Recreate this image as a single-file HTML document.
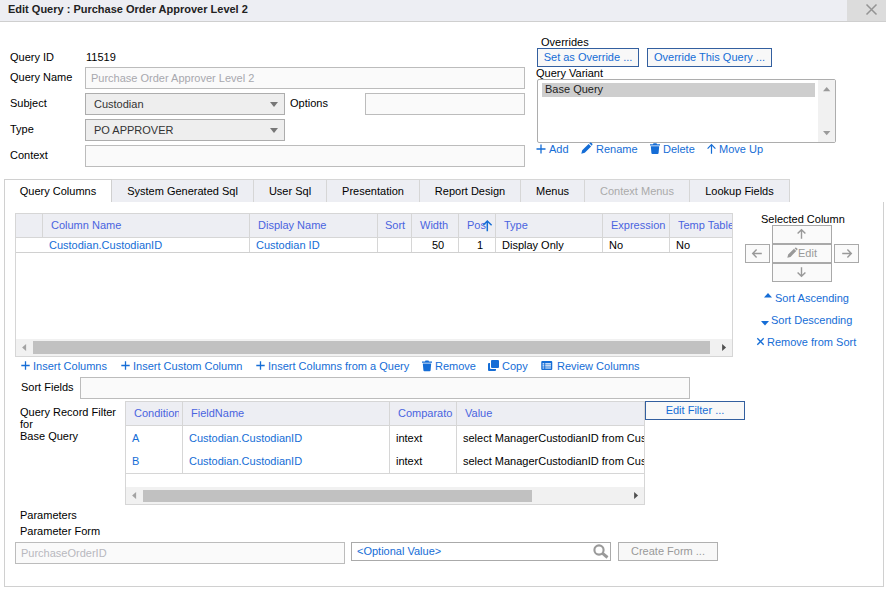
<!DOCTYPE html>
<html><head><meta charset="utf-8">
<style>
*{box-sizing:border-box;margin:0;padding:0}
html,body{width:886px;height:592px;overflow:hidden;background:#fff}
body{font-family:"Liberation Sans",Arial,sans-serif;font-size:11px;color:#000;position:relative}
.a{position:absolute;white-space:nowrap}
.t{position:absolute;white-space:nowrap;line-height:14px;height:14px}
.inp{position:absolute;border:1px solid #bcbcbc;background:#fafafa;height:22px;line-height:20px;padding-left:5px;color:#a8a8ae;white-space:nowrap;overflow:hidden}
.sel{position:absolute;border:1px solid #adadad;background:#eee;height:22px;line-height:20px;padding-left:8px;color:#333}
.sel:after{content:"";position:absolute;right:6px;top:8px;border:4px solid transparent;border-top:5px solid #777;border-bottom:0}
.btn{position:absolute;border:1px solid #335f9f;background:#f8f8f8;color:#156dd6;height:19px;line-height:17px;text-align:center}
.gb{position:absolute;border:1px solid #a9a9a9;background:#fafafa;color:#999}
.lnk{color:#156dd6}
.tab{position:absolute;top:179px;height:23px;line-height:22px;text-align:center;background:#edeef3;border:1px solid #d6d6d6;border-bottom:none;color:#000}
.hd{color:#4a64e0}
.vs{position:absolute;width:1px;background:#d6d6d6}
svg{position:absolute;overflow:visible}
</style></head><body>
<!-- title bar -->
<div class="a" style="left:0;top:0;width:886px;height:22px;background:#edeef3;border-bottom:1px solid #cfcfcf"></div>
<div class="t" style="left:8px;top:2px;font-weight:bold;color:#222">Edit Query : Purchase Order Approver Level 2</div>
<div class="a" style="left:847px;top:0;width:39px;height:21px;background:#dcdcdc"></div>
<svg style="left:866px;top:4px" width="11" height="11" viewBox="0 0 11 11"><path d="M0.5 0.5L10.5 10.5M10.5 0.5L0.5 10.5" stroke="#949494" stroke-width="1.5" fill="none"/></svg>

<!-- form -->
<div class="t" style="left:10px;top:50px">Query ID</div>
<div class="t" style="left:86px;top:50px">11519</div>
<div class="t" style="left:10px;top:70px">Query Name</div>
<div class="inp" style="left:85px;top:67px;width:440px">Purchase Order Approver Level 2</div>
<div class="t" style="left:10px;top:96px">Subject</div>
<div class="sel" style="left:85px;top:93px;width:200px">Custodian</div>
<div class="t" style="left:290px;top:96px">Options</div>
<div class="inp" style="left:365px;top:93px;width:160px"></div>
<div class="t" style="left:10px;top:122px">Type</div>
<div class="sel" style="left:85px;top:119px;width:200px">PO APPROVER</div>
<div class="t" style="left:10px;top:148px">Context</div>
<div class="inp" style="left:85px;top:145px;width:440px"></div>

<!-- overrides -->
<div class="t" style="left:541px;top:35px">Overrides</div>
<div class="btn" style="left:537px;top:48px;width:102px">Set as Override ...</div>
<div class="btn" style="left:647px;top:48px;width:125px">Override This Query ...</div>
<div class="t" style="left:536px;top:66px">Query Variant</div>
<div class="a" style="left:537px;top:79px;width:299px;height:64px;border:1px solid #adadad;border-radius:2px;background:#fff"></div>
<div class="a" style="left:818px;top:80px;width:17px;height:62px;background:#f1f1f1"></div>
<div class="a" style="left:542px;top:83px;width:273px;height:14px;background:#cecece;line-height:13px;padding-left:3px;color:#222">Base Query</div>
<svg style="left:823px;top:87px" width="7.4" height="4.2" viewBox="0 0 7 4"><path d="M0 4L3.5 0L7 4Z" fill="#9a9a9a"/></svg>
<svg style="left:823px;top:131px" width="7.4" height="4.2" viewBox="0 0 7 4"><path d="M0 0L3.5 4L7 0Z" fill="#9a9a9a"/></svg>

<svg style="left:536px;top:144px" width="10" height="10" viewBox="0 0 10 10"><path d="M5 0.5V9.5M0.5 5H9.5" stroke="#156dd6" stroke-width="1.3" fill="none"/></svg>
<div class="t lnk" style="left:549px;top:142px">Add</div>
<svg style="left:581px;top:143px" width="12" height="11" viewBox="0 0 12 11"><path d="M0.3 10.7L1.2 7.2L7.6 0.9L10.1 3.4L3.8 9.8Z M8.3 0.3L9 -0.3Q9.8 -0.8 10.5 -0.1L11.2 0.6Q11.8 1.3 11.3 2L10.7 2.7Z" fill="#156dd6"/></svg>
<div class="t lnk" style="left:596px;top:142px">Rename</div>
<svg style="left:650px;top:143px" width="10" height="11" viewBox="0 0 10 11"><path d="M0 1.2H3L3.5 0.3H6.5L7 1.2H10V2.4H0Z M0.8 3.2H9.2L8.6 10Q8.5 10.9 7.6 10.9H2.4Q1.5 10.9 1.4 10Z" fill="#156dd6"/></svg>
<div class="t lnk" style="left:663px;top:142px">Delete</div>
<svg style="left:707px;top:144px" width="9" height="10" viewBox="0 0 9 10"><path d="M4.5 9.8V0.8M0.6 4.6L4.5 0.7L8.4 4.6" stroke="#156dd6" stroke-width="1.2" fill="none"/></svg>
<div class="t lnk" style="left:719px;top:142px">Move Up</div>

<!-- tabs -->
<div class="a" style="left:4px;top:179px;width:880px;height:408px;border:1px solid #d0d0d0;border-top:none;border-right:none"></div>
<div class="a" style="left:883px;top:202px;width:1px;height:385px;background:#d0d0d0"></div>
<div class="tab" style="left:4px;width:108px;background:#fff;border-color:#d0d0d0">Query Columns</div>
<div class="tab" style="left:112px;width:142px;border-left:none">System Generated Sql</div>
<div class="tab" style="left:253px;width:74px">User Sql</div>
<div class="tab" style="left:326px;width:94px">Presentation</div>
<div class="tab" style="left:419px;width:102px">Report Design</div>
<div class="tab" style="left:520px;width:65px">Menus</div>
<div class="tab" style="left:584px;width:106px;color:#aaa">Context Menus</div>
<div class="tab" style="left:689px;width:101px">Lookup Fields</div>

<!-- grid 1 -->
<div class="a" style="left:15px;top:213px;width:718px;height:144px;border:1px solid #d6d6d6"></div>
<div class="a" style="left:16px;top:214px;width:716px;height:24px;background:#edeef3;border-bottom:1px solid #d6d6d6"></div>
<div class="a" style="left:16px;top:252px;width:716px;height:1px;background:#d0d0d0"></div>
<div class="vs" style="left:42px;top:214px;height:24px"></div>
<div class="vs" style="left:249px;top:214px;height:38px"></div>
<div class="vs" style="left:377px;top:214px;height:38px"></div>
<div class="vs" style="left:411px;top:214px;height:38px"></div>
<div class="vs" style="left:458px;top:214px;height:38px"></div>
<div class="vs" style="left:495px;top:214px;height:38px"></div>
<div class="vs" style="left:602px;top:214px;height:38px"></div>
<div class="vs" style="left:669px;top:214px;height:38px"></div>
<div class="t hd" style="left:51px;top:218px">Column Name</div>
<div class="t hd" style="left:258px;top:218px">Display Name</div>
<div class="t hd" style="left:385px;top:218px">Sort</div>
<div class="t hd" style="left:420px;top:218px">Width</div>
<div class="t hd" style="left:467px;top:218px">Pos</div>
<svg style="left:483px;top:219.5px" width="9" height="11.5" viewBox="0 0 9 11.5"><path d="M4.3 11.3V1M0.4 5L4.3 1L8.6 5.2" stroke="#156dd6" stroke-width="1.5" fill="none"/></svg>
<div class="t hd" style="left:504px;top:218px">Type</div>
<div class="t hd" style="left:611px;top:218px">Expression</div>
<div class="t hd" style="left:678px;top:218px;width:54px;overflow:hidden">Temp Table</div>
<div class="t lnk" style="left:49px;top:238px">Custodian.CustodianID</div>
<div class="t lnk" style="left:256px;top:238px">Custodian ID</div>
<div class="t" style="left:432px;top:238px">50</div>
<div class="t" style="left:477px;top:238px">1</div>
<div class="t" style="left:502px;top:238px">Display Only</div>
<div class="t" style="left:609px;top:238px">No</div>
<div class="t" style="left:676px;top:238px">No</div>
<!-- scrollbar -->
<div class="a" style="left:16px;top:339px;width:716px;height:17px;background:#f1f1f1"></div>
<div class="a" style="left:33px;top:341px;width:677px;height:13px;background:#c1c1c1"></div>
<svg style="left:22px;top:344px" width="4.2" height="7" viewBox="0 0 4 7"><path d="M4 0L0 3.5L4 7Z" fill="#a3a3a3"/></svg>
<svg style="left:722px;top:344px" width="4.2" height="7" viewBox="0 0 4 7"><path d="M0 0L4 3.5L0 7Z" fill="#505050"/></svg>

<!-- links row -->
<svg style="left:20.8px;top:361.4px" width="9" height="9" viewBox="0 0 9 9"><path d="M4.5 0.3V8.7M0.3 4.5H8.7" stroke="#156dd6" stroke-width="1.3" fill="none"/></svg>
<div class="t lnk" style="left:33px;top:359px">Insert Columns</div>
<svg style="left:120.8px;top:361.4px" width="9" height="9" viewBox="0 0 9 9"><path d="M4.5 0.3V8.7M0.3 4.5H8.7" stroke="#156dd6" stroke-width="1.3" fill="none"/></svg>
<div class="t lnk" style="left:133px;top:359px">Insert Custom Column</div>
<svg style="left:255.8px;top:361.4px" width="9" height="9" viewBox="0 0 9 9"><path d="M4.5 0.3V8.7M0.3 4.5H8.7" stroke="#156dd6" stroke-width="1.3" fill="none"/></svg>
<div class="t lnk" style="left:268px;top:359px">Insert Columns from a Query</div>
<svg style="left:422px;top:360px" width="10" height="11.5" viewBox="0 0 10 11"><path d="M0 1.2H3L3.5 0.3H6.5L7 1.2H10V2.4H0Z M0.8 3.2H9.2L8.6 10Q8.5 10.9 7.6 10.9H2.4Q1.5 10.9 1.4 10Z" fill="#156dd6"/></svg>
<div class="t lnk" style="left:435px;top:359px">Remove</div>
<svg style="left:488px;top:360px" width="11" height="11" viewBox="0 0 11 11"><path d="M4 0H10Q11 0 11 1V7Q11 8 10 8H4Q3 8 3 7V1Q3 0 4 0Z M0 4Q0 3 1 3H2V8Q2 9 3 9H8V10Q8 11 7 11H1Q0 11 0 10Z" fill="#156dd6"/></svg>
<div class="t lnk" style="left:502px;top:359px">Copy</div>
<svg style="left:541px;top:361px" width="11.5" height="9" viewBox="0 0 11 9"><path fill-rule="evenodd" d="M1 0H10Q11 0 11 1V8Q11 9 10 9H1Q0 9 0 8V1Q0 0 1 0Z M1.3 2.2V3.4H3V2.2Z M4 2.2V3.4H9.7V2.2Z M1.3 4.3V5.5H3V4.3Z M4 4.3V5.5H9.7V4.3Z M1.3 6.4V7.6H3V6.4Z M4 6.4V7.6H9.7V6.4Z" fill="#156dd6"/></svg>
<div class="t lnk" style="left:557px;top:359px">Review Columns</div>

<div class="t" style="left:21px;top:380px">Sort Fields</div>
<div class="inp" style="left:80px;top:377px;width:610px"></div>

<!-- filter -->
<div class="t" style="left:20px;top:405px">Query Record Filter</div>
<div class="t" style="left:20px;top:417px">for</div>
<div class="t" style="left:20px;top:429px">Base Query</div>

<div class="a" style="left:125px;top:401px;width:520px;height:104px;border:1px solid #d6d6d6"></div>
<div class="a" style="left:126px;top:402px;width:518px;height:24px;background:#edeef3;border-bottom:1px solid #d6d6d6"></div>
<div class="a" style="left:126px;top:473px;width:518px;height:1px;background:#d6d6d6"></div>
<div class="vs" style="left:182px;top:402px;height:71px"></div>
<div class="vs" style="left:389px;top:402px;height:71px"></div>
<div class="vs" style="left:456px;top:402px;height:71px"></div>
<div class="t hd" style="left:134px;top:406px;width:45px;overflow:hidden">Condition</div>
<div class="t hd" style="left:191px;top:406px">FieldName</div>
<div class="t hd" style="left:398px;top:406px;width:55px;overflow:hidden">Comparator</div>
<div class="t hd" style="left:465px;top:406px">Value</div>
<div class="t lnk" style="left:132px;top:431px">A</div>
<div class="t lnk" style="left:189px;top:431px">Custodian.CustodianID</div>
<div class="t" style="left:396px;top:431px">intext</div>
<div class="t" style="left:463px;top:431px;width:181px;overflow:hidden">select ManagerCustodianID from Custodian</div>
<div class="t lnk" style="left:132px;top:454px">B</div>
<div class="t lnk" style="left:189px;top:454px">Custodian.CustodianID</div>
<div class="t" style="left:396px;top:454px">intext</div>
<div class="t" style="left:463px;top:454px;width:181px;overflow:hidden">select ManagerCustodianID from Custodian</div>
<div class="a" style="left:126px;top:487px;width:518px;height:17px;background:#f1f1f1"></div>
<div class="a" style="left:143px;top:490px;width:389px;height:12px;background:#c1c1c1"></div>
<svg style="left:132px;top:492px" width="4.2" height="7" viewBox="0 0 4 7"><path d="M4 0L0 3.5L4 7Z" fill="#a3a3a3"/></svg>
<svg style="left:634px;top:492px" width="4.2" height="7" viewBox="0 0 4 7"><path d="M0 0L4 3.5L0 7Z" fill="#505050"/></svg>
<div class="btn" style="left:645px;top:401px;width:100px;height:19px;line-height:16px">Edit Filter ...</div>

<!-- selected column panel -->
<div class="t" style="left:761px;top:212px">Selected Column</div>
<div class="gb" style="left:772px;top:225px;width:60px;height:19px"></div>
<div class="gb" style="left:772px;top:244px;width:60px;height:19px"></div>
<div class="gb" style="left:772px;top:263px;width:60px;height:19px"></div>
<div class="gb" style="left:745px;top:244px;width:25px;height:19px"></div>
<div class="gb" style="left:834px;top:244px;width:25px;height:19px"></div>
<svg style="left:797px;top:229px" width="9" height="10" viewBox="0 0 9 10"><path d="M4.5 9.8V0.8M0.6 4.6L4.5 0.7L8.4 4.6" stroke="#999" stroke-width="1.4" fill="none"/></svg>
<svg style="left:797px;top:267px" width="9" height="10" viewBox="0 0 9 10"><path d="M4.5 0.2V9.2M0.6 5.4L4.5 9.3L8.4 5.4" stroke="#999" stroke-width="1.4" fill="none"/></svg>
<svg style="left:752px;top:249px" width="10" height="9" viewBox="0 0 10 9"><path d="M9.8 4.5H0.8M4.6 0.6L0.7 4.5L4.6 8.4" stroke="#999" stroke-width="1.4" fill="none"/></svg>
<svg style="left:842px;top:249px" width="10" height="9" viewBox="0 0 10 9"><path d="M0.2 4.5H9.2M5.4 0.6L9.3 4.5L5.4 8.4" stroke="#999" stroke-width="1.4" fill="none"/></svg>
<svg style="left:787px;top:248px" width="11" height="10" viewBox="0 0 12 11"><path d="M0.3 10.7L1.2 7.2L7.6 0.9L10.1 3.4L3.8 9.8Z M8.3 0.3L9 -0.3Q9.8 -0.8 10.5 -0.1L11.2 0.6Q11.8 1.3 11.3 2L10.7 2.7Z" fill="#999"/></svg>
<div class="t" style="left:798px;top:246px;color:#999">Edit</div>

<svg style="left:764px;top:293px" width="8" height="4.5" viewBox="0 0 8 4.5"><path d="M0 4.5L4 0L8 4.5Z" fill="#156dd6"/></svg>
<div class="t lnk" style="left:775px;top:291px">Sort Ascending</div>
<svg style="left:760.5px;top:320.5px" width="8" height="4.5" viewBox="0 0 8 4.5"><path d="M0 0L4 4.5L8 0Z" fill="#156dd6"/></svg>
<div class="t lnk" style="left:771px;top:313px">Sort Descending</div>
<svg style="left:757px;top:338px" width="7" height="7" viewBox="0 0 7 7"><path d="M0.3 0.3L6.7 6.7M6.7 0.3L0.3 6.7" stroke="#156dd6" stroke-width="1.3" fill="none"/></svg>
<div class="t lnk" style="left:767px;top:335px">Remove from Sort</div>

<!-- parameters -->
<div class="t" style="left:20px;top:508px">Parameters</div>
<div class="t" style="left:20px;top:524px">Parameter Form</div>
<div class="inp" style="left:15px;top:542px;width:330px;color:#b8b8be;height:22px;line-height:20px">PurchaseOrderID</div>
<div class="inp" style="left:351px;top:542px;width:260px;background:#fff;color:#156dd6;height:19px;line-height:17px;border-color:#aaa">&lt;Optional Value&gt;</div>
<svg style="left:593px;top:544px" width="16" height="14" viewBox="0 0 16 14"><circle cx="6" cy="6" r="4.6" stroke="#9a9a9a" stroke-width="2.1" fill="none"/><path d="M9.6 9.4L14.5 13.5" stroke="#9a9a9a" stroke-width="3" fill="none"/></svg>
<div class="btn" style="left:618px;top:542px;width:100px;height:19px;line-height:16px;border-color:#b0b0b0;color:#999">Create Form ...</div>
</body></html>
